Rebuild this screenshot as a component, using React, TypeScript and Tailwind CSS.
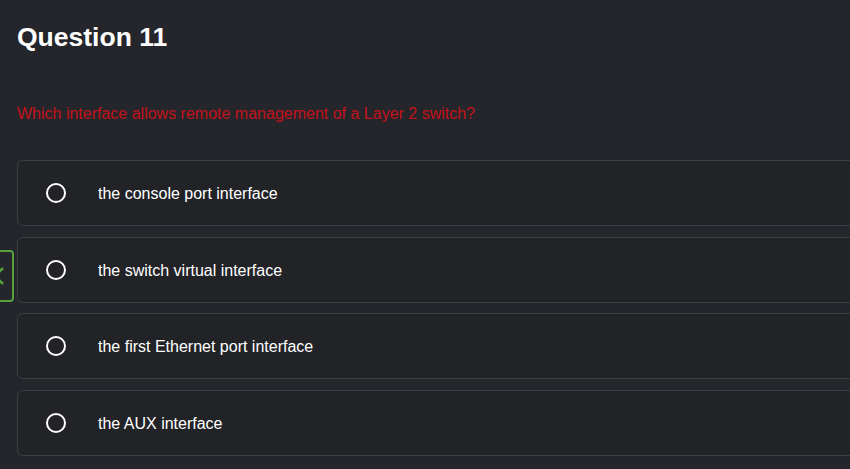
import React from "react";

const options = [
  "the console port interface",
  "the switch virtual interface",
  "the first Ethernet port interface",
  "the AUX interface",
];

export default function App() {
  return (
    <div
      className="relative w-[850px] h-[469px] overflow-hidden bg-[#25262b] pl-[17px]"
      style={{ fontFamily: '"Liberation Sans", Arial, sans-serif' }}
    >
      <h1 className="pt-[22px] text-[26.5px] leading-[30px] font-bold text-white">Question 11</h1>
      <p className="mt-[52px] text-[16px] leading-[20px] text-[#c4121c]">
        Which interface allows remote management of a Layer 2 switch?
      </p>
      <div className="mt-[36px] flex flex-col gap-[10.7px] w-[860px]">
        {options.map((o) => (
          <div
            key={o}
            className="flex h-[66px] items-center rounded-[6px] border border-[#3c3d42] bg-[#222327]"
          >
            <span className="ml-[28px] box-border h-[20px] w-[20px] shrink-0 rounded-full border-[2.5px] border-white" />
            <span className="ml-[32px] pt-[2px] text-[16px] text-white">{o}</span>
          </div>
        ))}
      </div>
      <div className="absolute left-[-30px] top-[250px] flex h-[52px] w-[44px] items-center justify-end rounded-[4px] border-2 border-[#55a03c]">
        <svg className="mr-[7px]" width="20" height="20" viewBox="0 0 20 20">
          <path d="M2 2 L18 18 M18 2 L2 18" stroke="#55a03c" strokeWidth="2.5" />
        </svg>
      </div>
    </div>
  );
}
